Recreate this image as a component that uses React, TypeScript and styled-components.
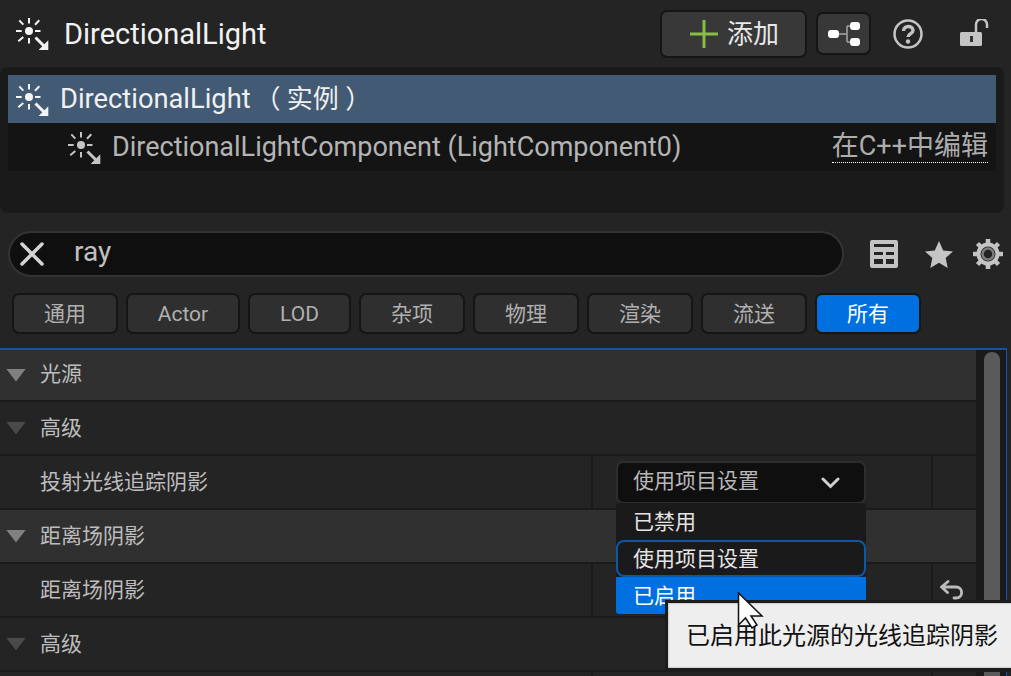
import styled, {createGlobalStyle} from 'styled-components'

const GlobalStyle = createGlobalStyle`
    html, body {
        margin: 0;
        padding: 0;
        height: 100%;
        background: #242424;
        overflow: hidden;
    }
    * {
        box-sizing: border-box;
    }
    body {
        font-family: Roboto, "Noto Sans CJK SC", sans-serif;
    }
`

const Page = styled.div`
    position: relative;
    width: 1011px;
    height: 676px;
    overflow: hidden;
    background: #242424;
`

const Header = styled.div`
    height: 67px;
    display: flex;
    align-items: center;
    padding-left: 16px;
`

const Title = styled.div`
    margin-left: 15px;
    font-size: 29px;
    color: #f2f2f2;
    flex: 1;
`

const AddButton = styled.div`
    width: 147px;
    height: 48px;
    display: flex;
    align-items: center;
    padding-left: 28px;
    gap: 9px;
    background: #383838;
    border: 2px solid #151515;
    border-radius: 7px;
    font-size: 26px;
    color: #e8e8e8;
`

const AddLabel = styled.span`
    margin-bottom: 4px;
`

const TreeButton = styled.div`
    width: 55px;
    height: 43px;
    margin-left: 9px;
    display: flex;
    align-items: center;
    justify-content: center;
    background: #383838;
    border: 2px solid #151515;
    border-radius: 7px;
`

const HeaderIcons = styled.div`
    display: flex;
    align-items: center;
    width: 140px;
    padding-left: 22px;
    gap: 37px;
`

const TreePanel = styled.div`
    width: 1004px;
    height: 146px;
    padding: 8px;
    background: #1a1a1a;
    border-radius: 7px;
`

const TreeRow = styled.div<{$selected?: boolean}>`
    height: 48px;
    display: flex;
    align-items: center;
    background: ${(p) => (p.$selected ? '#425a73' : '#141414')};
    color: ${(p) => (p.$selected ? '#f0f0f0' : '#b4b4b4')};
    font-size: ${(p) => (p.$selected ? '27.300px' : '27px')};
    padding-left: ${(p) => (p.$selected ? '8px' : '60px')};
    padding-right: 8px;
`

const TreeName = styled.span<{$raised?: boolean}>`
    margin-left: 11px;
    margin-bottom: ${(p) => (p.$raised ? '6px' : '0')};
    flex: 1;
`

const InstanceTag = styled.span`
    margin-left: -3px;
    font-size: 26px;
`

const EditLink = styled.span`
    font-size: 27px;
    line-height: 31px;
    color: #adadad;
    border-bottom: 1px dotted #ffffff;
`

const SearchRow = styled.div`
    margin-top: 18px;
    height: 46px;
    padding-left: 8px;
    display: flex;
    align-items: center;
`

const SearchBox = styled.div`
    width: 836px;
    height: 46px;
    display: flex;
    align-items: center;
    padding-left: 10px;
    background: #0f0f0f;
    border: 2px solid #333333;
    border-radius: 23px;
`

const SearchText = styled.span`
    margin-left: 30px;
    margin-bottom: 6px;
    font-size: 28px;
    color: #c0c0c0;
`

const SearchIcons = styled.div`
    display: flex;
    align-items: center;
    margin-left: 26px;
    gap: 27px;
`

const GearSlot = styled.div`
    display: flex;
    margin-left: -7px;
`

const Tabs = styled.div`
    margin-top: 16px;
    padding-left: 12px;
    display: flex;
    gap: 8px;
`

const Tab = styled.div<{$width: number; $active?: boolean}>`
    width: ${(p) => p.$width}px;
    height: 41px;
    display: flex;
    align-items: center;
    justify-content: center;
    font-size: 21px;
    color: ${(p) => (p.$active ? '#ffffff' : '#b0b0b0')};
    background: ${(p) => (p.$active ? '#0070e0' : '#2f2f2f')};
    border: 2px solid #151515;
    border-radius: 7px;
`

const TabLabel = styled.span<{$raised?: boolean}>`
    margin-bottom: ${(p) => (p.$raised ? '4px' : '0')};
`

const Details = styled.div`
    margin-top: 14px;
    width: 1007px;
    height: 328px;
    display: flex;
    border-top: 2px solid #0b58ab;
    border-right: 1px solid #0b58ab;
`

const Rows = styled.div`
    width: 976px;
    flex-shrink: 0;
`

const Row = styled.div<{$main?: boolean; $short?: boolean}>`
    height: ${(p) => (p.$short ? '52px' : '54px')};
    display: flex;
    align-items: stretch;
    background: ${(p) => (p.$main ? '#303030' : '#242424')};
    border-bottom: 2px solid #1a1a1a;
`

const NameCell = styled.div`
    width: 591px;
    display: flex;
    align-items: center;
    padding-left: 6px;
    font-size: 21px;
    color: #bdbdbd;
`

const Arrow = styled.span<{$bright?: boolean}>`
    width: 20px;
    height: 13px;
    margin-right: 14px;
    background: ${(p) => (p.$bright ? '#808080' : '#4a4a4a')};
    clip-path: polygon(0 0, 100% 0, 50% 100%);
`

const Label = styled.span<{$indent?: boolean; $high?: boolean}>`
    margin-left: ${(p) => (p.$indent ? '34px' : '0')};
    margin-bottom: ${(p) => (p.$high ? '6px' : '4px')};
`

const ValueCell = styled.div`
    width: 340px;
    border-left: 2px solid #1a1a1a;
`

const ResetCell = styled.div`
    flex: 1;
    display: flex;
    align-items: center;
    justify-content: center;
    padding-right: 4px;
    border-left: 2px solid #1a1a1a;
`

const Track = styled.div`
    flex: 1;
    padding: 2px 6px 0 8px;
    background: #1a1a1a;
`

const Thumb = styled.div`
    height: 100%;
    background: #5a5a5a;
    border-radius: 8px 8px 0 0;
`

const Combo = styled.div`
    position: absolute;
    left: 616px;
    top: 461px;
    width: 250px;
    height: 43px;
    display: flex;
    align-items: center;
    justify-content: space-between;
    padding: 0 24px 0 15px;
    background: #0f0f0f;
    border: 2px solid #2e2e2e;
    border-radius: 7px;
    font-size: 21px;
    color: #b8b8b8;
`

const ComboText = styled.span`
    margin-bottom: 8px;
`

const Menu = styled.div`
    position: absolute;
    left: 616px;
    top: 503px;
    width: 250px;
    background: #1a1a1a;
    border-radius: 3px;
    font-size: 21px;
    color: #e4e4e4;
`

const MenuItem = styled.div<{$focus?: boolean; $hover?: boolean}>`
    height: 37px;
    display: flex;
    align-items: center;
    padding-bottom: 4px;
    padding-left: ${(p) => (p.$focus ? '15px' : '17px')};
    background: ${(p) => (p.$hover ? '#0070e0' : 'transparent')};
    color: ${(p) => (p.$hover ? '#ffffff' : '#e4e4e4')};
    border: ${(p) => (p.$focus ? '2px solid #0b58ab' : '0')};
    border-radius: ${(p) => (p.$focus ? '8px' : p.$hover ? '0 0 3px 3px' : '0')};
`

const Tip = styled.div`
    position: absolute;
    left: 665px;
    top: 600px;
    width: 360px;
    height: 72px;
    display: flex;
    align-items: center;
    padding: 0 0 4px 18px;
    background: #eeeeee;
    border: 3px solid #1c1c1c;
    border-bottom-width: 4px;
    box-shadow: inset 0 0 2px #8a8a8a;
    font-size: 24px;
    color: #111111;
    white-space: nowrap;
`

const Cursor = styled.svg`
    position: absolute;
    left: 737px;
    top: 592px;
`

const LightIcon = ({color}: {color: string}) => (
    <svg width="33" height="33" viewBox="0 -1 33 33" fill="none" stroke={color} strokeWidth="2">
        <circle cx="13" cy="13" r="4" fill={color} stroke="none" />
        <path d="M13 0v5.500M13 20v5.500M0 13h5.700M19 13h5.500M3.300 2.300l4 4.400M23.300 2.300l-4.300 4.400M2.300 23.300l5-4.300" />
        <path d="M19.500 19.500l8.500 8.500" strokeWidth="3" />
        <path d="M32.300 22.300v10h-10z" fill={color} stroke="none" />
    </svg>
)

const PlusIcon = () => (
    <svg width="28" height="28" viewBox="0 0 28 28" stroke="#86bf46" strokeWidth="3" strokeLinecap="round">
        <path d="M14 1v26M1 14h26" />
    </svg>
)

const HierarchyIcon = () => (
    <svg width="33" height="26" viewBox="0 0 33 26" fill="none">
        <path d="M12 13h8M20 5h3M20 21h3M20 5v16" stroke="#8c8c8c" strokeWidth="2" />
        <rect x="1" y="9" width="11" height="8" rx="3" fill="#ffffff" />
        <rect x="23" y="1" width="10" height="8" rx="3" fill="#ffffff" />
        <rect x="23" y="17" width="10" height="8" rx="3" fill="#ffffff" />
    </svg>
)

const HelpIcon = () => (
    <svg width="30" height="30" viewBox="0 0 30 30" fill="none" stroke="#c4c4c4">
        <circle cx="15" cy="15" r="13.500" strokeWidth="2.500" />
        <path d="M10.500 12c0-6 9.500-6 9.500-.500 0 3.500-5 3-5 6.500" strokeWidth="3.400" />
        <circle cx="15" cy="22.500" r="2.200" fill="#c4c4c4" stroke="none" />
    </svg>
)

const LockIcon = () => (
    <svg width="29" height="29" viewBox="0 1 29 29" fill="none">
        <path d="M16 14V6.500a5.500 5.500 0 0111 0V10" stroke="#c4c4c4" strokeWidth="2.500" />
        <path d="M0 15.500a1.500 1.500 0 011.500-1.500h19a1.500 1.500 0 011.500 1.500v11a1.500 1.500 0 01-1.500 1.500h-19A1.500 1.500 0 010 26.500z" fill="#c4c4c4" />
        <rect x="10" y="18" width="3" height="6" fill="#333333" />
    </svg>
)

const CloseIcon = () => (
    <svg width="24" height="24" viewBox="0 0 24 24" stroke="#d4d4d4" strokeWidth="3.500" strokeLinecap="round">
        <path d="M2 2l20 20M22 2L2 22" />
    </svg>
)

const TableIcon = () => (
    <svg width="28" height="28" viewBox="0 0 28 28">
        <path
            fill="#c4c4c4"
            fillRule="evenodd"
            d="M2 0h24a2 2 0 012 2v24a2 2 0 01-2 2H2a2 2 0 01-2-2V2a2 2 0 012-2zM4 4v3h20V4zM4 12v3h9v-3zM16 12v3h8v-3zM4 19v5h9v-5zM16 19v5h8v-5z"
        />
    </svg>
)

const StarIcon = () => (
    <svg width="28" height="27" viewBox="0 0 28 27">
        <path fill="#c4c4c4" d="M14 0l4.200 9.400L28 10.400l-7.300 6.500L22.700 27 14 21.800 5.300 27l2-10.100L0 10.400l9.800-1z" />
    </svg>
)

const GearIcon = () => (
    <svg width="30" height="30" viewBox="0 0 30 30" fill="none">
        <path
            d="M15 0v6M15 24v6M0 15h6M24 15h6M4.500 4.500l4 4M21.500 21.500l4 4M25.500 4.500l-4 4M8.500 21.500l-4 4"
            stroke="#c4c4c4"
            strokeWidth="4.500"
        />
        <circle cx="15" cy="15" r="9.500" stroke="#c4c4c4" strokeWidth="4" />
        <circle cx="15" cy="15" r="5.500" stroke="#7c7c7c" strokeWidth="2.500" />
    </svg>
)

const ChevronIcon = () => (
    <svg width="19" height="12" viewBox="0 0 19 12" fill="none" stroke="#d0d0d0" strokeWidth="3" strokeLinecap="round">
        <path d="M2 2l7.500 7.500L17 2" />
    </svg>
)

const ResetIcon = () => (
    <svg width="25" height="20" viewBox="0 0 25 20" fill="none" stroke="#bcbcbc" strokeWidth="2.800" strokeLinecap="round" strokeLinejoin="round">
        <path d="M8 1.500L1.500 7 7.500 12.500M1.500 7H16c7.500 0 7.500 11 0 11h-2" />
    </svg>
)

const tabs = [
    {label: '通用', width: 106, raised: true},
    {label: 'Actor', width: 114},
    {label: 'LOD', width: 103},
    {label: '杂项', width: 106, raised: true},
    {label: '物理', width: 106, raised: true},
    {label: '渲染', width: 106, raised: true},
    {label: '流送', width: 106, raised: true},
    {label: '所有', width: 106, raised: true, active: true},
]

function App() {
    return (
        <Page>
            <GlobalStyle />
            <Header>
                <LightIcon color="#f4f4f4" />
                <Title>DirectionalLight</Title>
                <AddButton>
                    <PlusIcon />
                    <AddLabel>添加</AddLabel>
                </AddButton>
                <TreeButton>
                    <HierarchyIcon />
                </TreeButton>
                <HeaderIcons>
                    <HelpIcon />
                    <LockIcon />
                </HeaderIcons>
            </Header>

            <TreePanel>
                <TreeRow $selected>
                    <LightIcon color="#f4f4f4" />
                    <TreeName $raised>
                        DirectionalLight <InstanceTag>（ 实例 ）</InstanceTag>
                    </TreeName>
                </TreeRow>
                <TreeRow>
                    <LightIcon color="#c4c4c4" />
                    <TreeName>DirectionalLightComponent (LightComponent0)</TreeName>
                    <EditLink>在C++中编辑</EditLink>
                </TreeRow>
            </TreePanel>

            <SearchRow>
                <SearchBox>
                    <CloseIcon />
                    <SearchText>ray</SearchText>
                </SearchBox>
                <SearchIcons>
                    <TableIcon />
                    <StarIcon />
                    <GearSlot>
                        <GearIcon />
                    </GearSlot>
                </SearchIcons>
            </SearchRow>

            <Tabs>
                {tabs.map((tab) => (
                    <Tab key={tab.label} $width={tab.width} $active={tab.active}>
                        <TabLabel $raised={tab.raised}>{tab.label}</TabLabel>
                    </Tab>
                ))}
            </Tabs>

            <Details>
                <Rows>
                    <Row $main $short>
                        <NameCell>
                            <Arrow $bright />
                            <Label $high>光源</Label>
                        </NameCell>
                    </Row>
                    <Row>
                        <NameCell>
                            <Arrow />
                            <Label>高级</Label>
                        </NameCell>
                    </Row>
                    <Row>
                        <NameCell>
                            <Label $indent>投射光线追踪阴影</Label>
                        </NameCell>
                        <ValueCell />
                        <ResetCell />
                    </Row>
                    <Row $main>
                        <NameCell>
                            <Arrow $bright />
                            <Label>距离场阴影</Label>
                        </NameCell>
                    </Row>
                    <Row>
                        <NameCell>
                            <Label $indent>距离场阴影</Label>
                        </NameCell>
                        <ValueCell />
                        <ResetCell>
                            <ResetIcon />
                        </ResetCell>
                    </Row>
                    <Row>
                        <NameCell>
                            <Arrow />
                            <Label>高级</Label>
                        </NameCell>
                    </Row>
                    <Row>
                        <NameCell />
                        <ValueCell />
                        <ResetCell />
                    </Row>
                </Rows>
                <Track>
                    <Thumb />
                </Track>
            </Details>

            <Combo>
                <ComboText>使用项目设置</ComboText>
                <ChevronIcon />
            </Combo>
            <Menu>
                <MenuItem>已禁用</MenuItem>
                <MenuItem $focus>使用项目设置</MenuItem>
                <MenuItem $hover>已启用</MenuItem>
            </Menu>
            <Tip>已启用此光源的光线追踪阴影</Tip>
            <Cursor width="28" height="38" viewBox="0 0 28 38">
                <path d="M1.500 1v32l7-7 6.500 10 5-3-6-9h11z" fill="#ffffff" stroke="#111111" strokeWidth="1.500" />
            </Cursor>
        </Page>
    )
}

export default App
